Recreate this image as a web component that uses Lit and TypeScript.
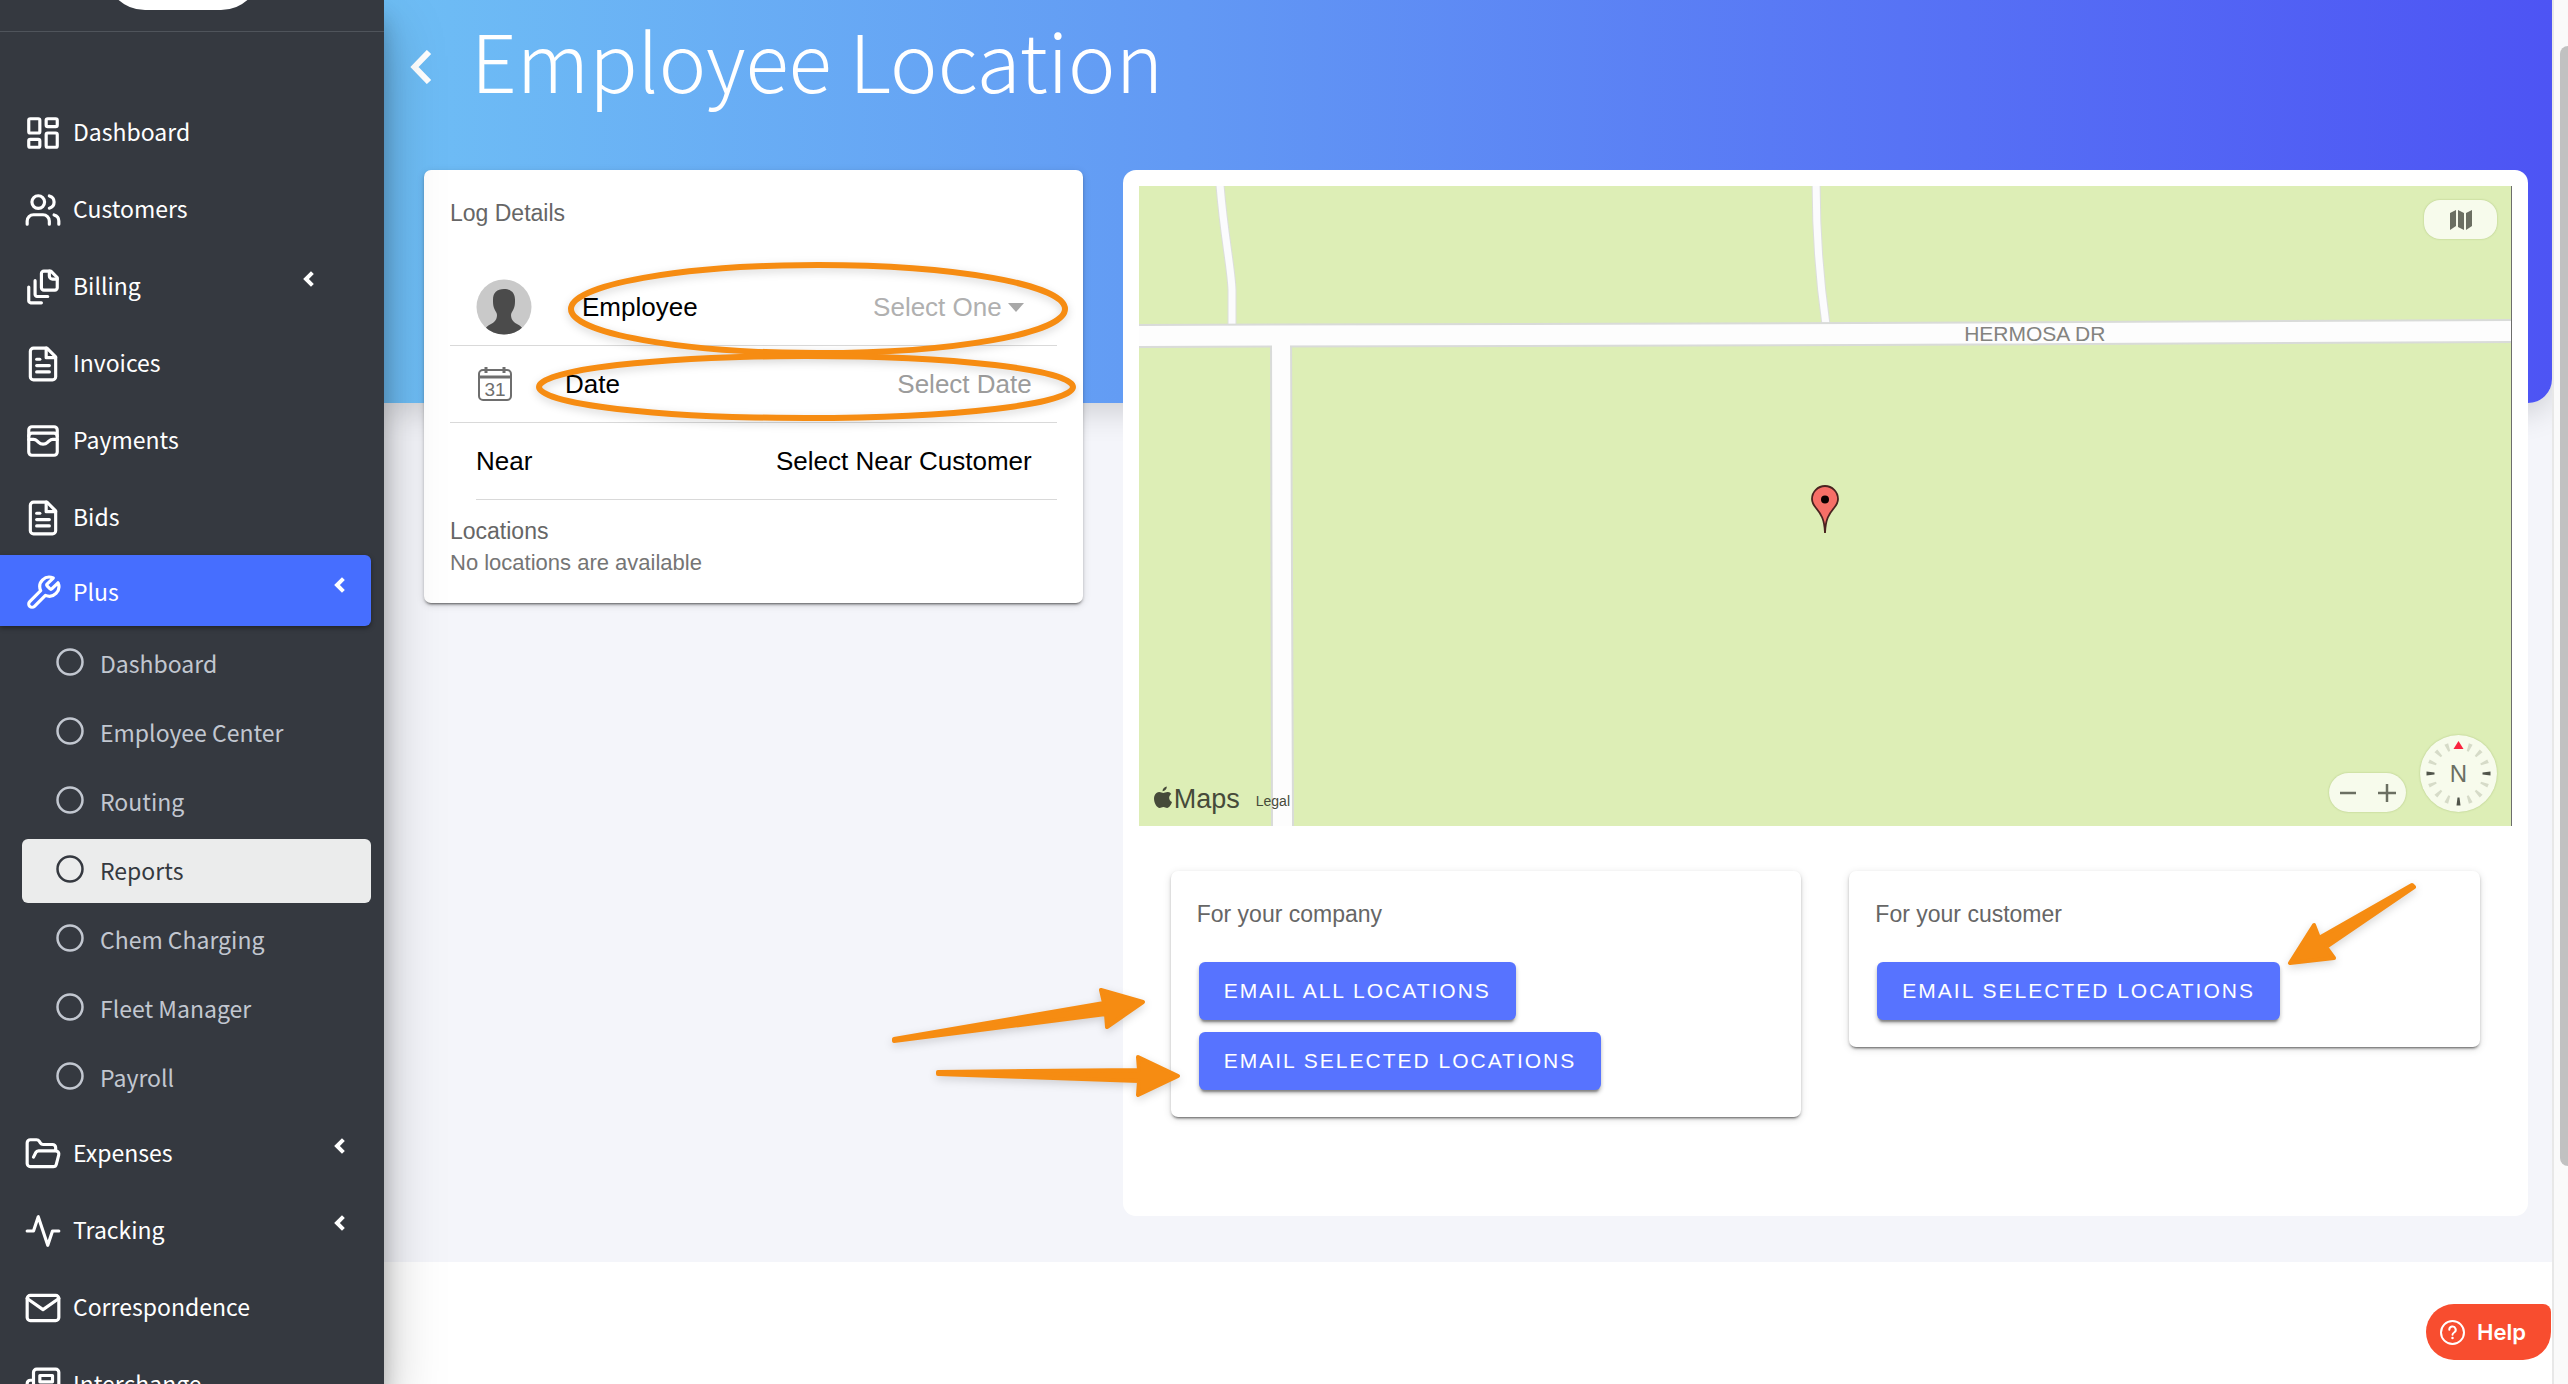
import { LitElement, html, css, svg, nothing } from "lit";
import { customElement, property } from "lit/decorators.js";
import { classMap } from "lit/directives/class-map.js";

const ICONS: Record<string, unknown> = {
  dashboard: svg`<rect x="3" y="3" width="7" height="9" rx="1"/><rect x="14" y="3" width="7" height="5" rx="1"/><rect x="14" y="12" width="7" height="9" rx="1"/><rect x="3" y="16" width="7" height="5" rx="1"/>`,
  users: svg`<path d="M16 21v-2a4 4 0 0 0-4-4H6a4 4 0 0 0-4 4v2"/><circle cx="9" cy="7" r="4"/><path d="M22 21v-2a4 4 0 0 0-3-3.87"/><path d="M16 3.13a4 4 0 0 1 0 7.75"/>`,
  stack: svg`<path d="M21 7h-3a2 2 0 0 1-2-2V2"/><path d="M21 6v6.5c0 .8-.7 1.5-1.5 1.5h-7c-.8 0-1.5-.7-1.5-1.5v-9c0-.8.7-1.5 1.5-1.5H17Z"/><path d="M7 8v8.8c0 .3.2.6.4.8.2.2.5.4.8.4H15"/><path d="M3 12v8.8c0 .3.2.6.4.8.2.2.5.4.8.4H11"/>`,
  file: svg`<path d="M14.5 2H6a2 2 0 0 0-2 2v16a2 2 0 0 0 2 2h12a2 2 0 0 0 2-2V7.5L14.5 2z"/><path d="M14 2v6h6"/><path d="M16 13H8"/><path d="M16 17H8"/><path d="M10 9H8"/>`,
  wallet: svg`<rect x="3" y="3" width="18" height="18" rx="2"/><path d="M3 9a2 2 0 0 1 2-2h14a2 2 0 0 1 2 2"/><path d="M3 11h3c.8 0 1.6.3 2.1.9l1.1.9c1.6 1.6 4.1 1.6 5.7 0l1.1-.9c.5-.5 1.3-.9 2.1-.9H21"/>`,
  wrench: svg`<path d="M14.7 6.3a1 1 0 0 0 0 1.4l1.6 1.6a1 1 0 0 0 1.4 0l3.77-3.77a6 6 0 0 1-7.94 7.94l-6.91 6.91a2.12 2.12 0 0 1-3-3l6.91-6.91a6 6 0 0 1 7.94-7.94l-3.76 3.76z"/>`,
  folder: svg`<path d="m6 14 1.45-2.9A2 2 0 0 1 9.24 10H20a2 2 0 0 1 1.94 2.5l-1.55 6a2 2 0 0 1-1.94 1.5H4a2 2 0 0 1-2-2V5c0-1.1.9-2 2-2h3.93a2 2 0 0 1 1.66.9l.82 1.2a2 2 0 0 0 1.66.9H18a2 2 0 0 1 2 2v2"/>`,
  activity: svg`<path d="M22 12h-4l-3 9L9 3l-3 9H2"/>`,
  mail: svg`<rect x="2" y="4" width="20" height="16" rx="2"/><path d="m22 6-10 7L2 6"/>`,
  news: svg`<path d="M4 22h16a2 2 0 0 0 2-2V4a2 2 0 0 0-2-2H8a2 2 0 0 0-2 2v16a2 2 0 0 1-2 2Zm0 0a2 2 0 0 1-2-2v-9c0-1.1.9-2 2-2h2"/><path d="M18 14h-8"/><path d="M15 18h-5"/><path d="M10 6h8v4h-8V6Z"/>`,
};

interface Item {
  label: string;
  icon: string;
  caret?: "near" | "edge";
  active?: boolean;
  children?: string[];
}

const MENU: Item[] = [
  { label: "Dashboard", icon: "dashboard" },
  { label: "Customers", icon: "users" },
  { label: "Billing", icon: "stack", caret: "near" },
  { label: "Invoices", icon: "file" },
  { label: "Payments", icon: "wallet" },
  { label: "Bids", icon: "file" },
  {
    label: "Plus",
    icon: "wrench",
    caret: "edge",
    active: true,
    children: ["Dashboard", "Employee Center", "Routing", "Reports", "Chem Charging", "Fleet Manager", "Payroll"],
  },
  { label: "Expenses", icon: "folder", caret: "edge" },
  { label: "Tracking", icon: "activity", caret: "edge" },
  { label: "Correspondence", icon: "mail" },
  { label: "Interchange", icon: "news" },
];

@customElement("side-nav")
class SideNav extends LitElement {
  @property() current = "Reports";

  static styles = css`
    :host {
      display: block;
      box-sizing: border-box;
      overflow: hidden;
      background: #353940;
      color: #fff;
      font-family: "Noto Sans CJK SC", "Open Sans", sans-serif;
      font-size: 23px;
      line-height: 36px;
    }
    .brand {
      display: flex;
      justify-content: center;
      align-items: flex-end;
      height: 32px;
      box-sizing: border-box;
      padding: 0 18px 21px 0;
      border-bottom: 1px solid #4f545b;
      overflow: hidden;
    }
    .logo {
      flex: none;
      width: 156px;
      height: 80px;
      border-radius: 40px;
      background: #fff;
    }
    ul {
      list-style: none;
      margin: 0;
      padding: 0;
    }
    .menu {
      display: flex;
      flex-direction: column;
      gap: 6px;
      padding: 63px 13px 0 0;
    }
    .open {
      margin-top: -2px;
    }
    a {
      color: inherit;
      text-decoration: none;
      display: flex;
      align-items: center;
      box-sizing: border-box;
    }
    .item {
      height: 71px;
      padding: 0 26px 0 24px;
      gap: 11px;
    }
    .item.near {
      padding-right: 57px;
    }
    .item.active {
      background: #466eff;
      border-radius: 0 6px 6px 0;
      box-shadow: 0 2px 5px rgba(0, 0, 0, 0.4);
    }
    .icon {
      width: 38px;
      height: 38px;
      margin-top: 4px;
      flex: none;
    }
    .label {
      flex: 1;
    }
    .caret {
      width: 11px;
      height: 16px;
      margin-bottom: 12px;
    }
    .sub {
      display: flex;
      flex-direction: column;
      gap: 5px;
      padding: 6px 0 0 22px;
      color: #c2c7d0;
    }
    .child {
      height: 64px;
      padding: 0 34px 2px;
      gap: 16px;
      border-radius: 6px;
    }
    .child.current {
      background: #ebecec;
      color: #353940;
    }
    .dot {
      width: 28px;
      height: 28px;
      margin-bottom: 2px;
      flex: none;
    }
  `;

  private item(it: Item) {
    return html`<li class=${it.children ? "open" : ""}>
      <a href="#" class=${classMap({ item: true, active: !!it.active, near: it.caret === "near" })}>
        <svg class="icon" viewBox="0 0 24 24" fill="none" stroke="currentColor" stroke-width="2"
          stroke-linecap="round" stroke-linejoin="round" aria-hidden="true">${ICONS[it.icon]}</svg>
        <span class="label">${it.label}</span>
        ${it.caret
          ? html`<svg class="caret" viewBox="0 0 11 16" fill="none" stroke="currentColor" stroke-width="4"
              stroke-linejoin="miter" aria-hidden="true"><path d="M9.400 1.600 3 8l6.400 6.400"/></svg>`
          : nothing}
      </a>
      ${it.children
        ? html`<ul class="sub">
            ${it.children.map(
              (c) => html`<li><a href="#" class=${classMap({ child: true, current: c === this.current })}>
                <svg class="dot" viewBox="0 0 28 28" aria-hidden="true"><circle cx="14" cy="14" r="12.500" fill="none" stroke="currentColor" stroke-width="2.500"/></svg>
                <span>${c}</span></a></li>`
            )}
          </ul>`
        : nothing}
    </li>`;
  }

  render() {
    return html`<div class="brand"><div class="logo"></div></div>
      <nav aria-label="Main"><ul class="menu">${MENU.map((m) => this.item(m))}</ul></nav>`;
  }
}

@customElement("location-map")
class LocationMap extends LitElement {
  static styles = css`
    :host {
      display: block;
      position: relative;
      height: 640px;
      background: #ddeeb6;
      border-right: 1px solid #6d6d6d;
      overflow: hidden;
      font-family: "Liberation Sans", Arial, sans-serif;
      color: #464a3a;
    }
    .roads {
      display: block;
      width: 100%;
      height: 100%;
    }
    .pin {
      position: absolute;
      left: calc(50% - 14px);
      top: 299px;
      width: 28px;
      height: 49px;
    }
    .type,
    .zoom,
    .compass {
      position: absolute;
      background: #f7fbec;
      box-shadow: 0 0 2px rgba(90, 120, 30, 0.35);
      color: #6b6f62;
    }
    .type {
      top: 14px;
      right: 14px;
      width: 73px;
      height: 39px;
      border: 0;
      padding: 0;
      border-radius: 16px;
      display: grid;
      place-items: center;
    }
    .type svg {
      width: 22px;
      height: 22px;
    }
    .zoom {
      right: 105px;
      bottom: 14px;
      width: 77px;
      height: 39px;
      border-radius: 20px;
      display: grid;
      grid-template-columns: 1fr 1fr;
    }
    .zoom button {
      border: 0;
      padding: 0;
      background: none;
      color: inherit;
      display: grid;
      place-items: center;
    }
    .zoom svg {
      width: 18px;
      height: 18px;
    }
    .compass {
      right: 14px;
      bottom: 14px;
      width: 77px;
      height: 77px;
      border-radius: 50%;
    }
    .compass svg {
      display: block;
      width: 100%;
      height: 100%;
    }
    .legal {
      position: absolute;
      left: 15px;
      bottom: 7px;
      display: flex;
      align-items: center;
      font-size: 27px;
      line-height: 36px;
    }
    .legal svg {
      width: 18px;
      height: 23px;
      margin: 0 2px 4px 0;
    }
    .legal a {
      color: inherit;
      font-size: 14px;
      text-decoration: none;
      margin: 4px 0 0 16px;
    }
    text {
      font-family: "Liberation Sans", Arial, sans-serif;
    }
  `;

  private tick(i: number) {
    if (i === 0) return nothing;
    const strong = i % 4 === 0;
    return svg`<path d="M36.500 6.500h4l-1 8h-2z" transform="rotate(${i * 22.5} 38.500 38.500)" fill=${strong ? "#50544a" : "#d6dbc8"}/>`;
  }

  render() {
    return html`
      <svg class="roads" viewBox="0 0 1372 640" preserveAspectRatio="xMidYMid slice" role="img" aria-label="Street map">
        <g fill="none" stroke-linecap="butt">
          <path d="M81-1C85 50 92 80 93 104V142" stroke="#dcdedc" stroke-width="9"/>
          <path d="M677-1C677 50 682 105 687 140" stroke="#dcdedc" stroke-width="9"/>
          <path d="M81-1C85 50 92 80 93 104V142" stroke="#fbfbfd" stroke-width="7"/>
          <path d="M677-1C677 50 682 105 687 140" stroke="#fbfbfd" stroke-width="7"/>
        </g>
        <path d="M132 150 133 642H154L152 150z" fill="#fdfdfd" stroke="#d9dbd9" stroke-width="2"/>
        <path d="M-3 139 720 137 1376 134V156L720 159-3 161z" fill="#fdfdfd" stroke="#d9dbd9" stroke-width="2"/>
        <path d="M133 155h18v10h-18z" fill="#fdfdfd"/>
        <text x="825" y="155" font-size="21" fill="#83837f">HERMOSA DR</text>
      </svg>
      <svg class="pin" viewBox="0 0 28 49" role="img" aria-label="Location pin">
        <path d="M14 48C13.500 34 10 29 5 23 2.500 20 1 17.500 1 14a13 13 0 0 1 26 0c0 3.500-1.500 6-4 9-5 6-8.500 11-9 25z" fill="#f66f67" stroke="#4a2320" stroke-width="1.800"/>
        <circle cx="14" cy="14.500" r="4" fill="#0b0000"/>
      </svg>
      <button class="type" aria-label="Map type">
        <svg viewBox="0 0 22 22" fill="currentColor"><path d="M0 4 6 1v16l-6 4zM8 1l6 3v17l-6-3zM16 4l6-3v16l-6 4z"/></svg>
      </button>
      <div class="zoom">
        <button aria-label="Zoom out"><svg viewBox="0 0 18 18" fill="none" stroke="currentColor" stroke-width="2.500"><path d="M1 9h16"/></svg></button>
        <button aria-label="Zoom in"><svg viewBox="0 0 18 18" fill="none" stroke="currentColor" stroke-width="2.500"><path d="M0 9h18M9 0v18"/></svg></button>
      </div>
      <div class="compass">
        <svg viewBox="0 0 77 77" role="img" aria-label="Compass">
          ${Array.from({ length: 16 }, (_, i) => this.tick(i))}
          <path d="M38.500 6 43.500 14h-10z" fill="#f9243f"/>
          <text x="38.500" y="47" font-size="24" text-anchor="middle" fill="#6b6f62">N</text>
        </svg>
      </div>
      <div class="legal">
        <svg viewBox="0 0 18 22" fill="currentColor" aria-hidden="true"><path d="M12.800 0c.2 2.500-1.900 4.900-4.200 4.800C8.300 2.400 10.500.3 12.800 0zM17.300 7.600c-3.200 2-2.700 6.500.7 7.900-.8 2.300-2.700 5.900-4.900 6-1.500 0-2-.9-3.700-.9s-2.300.9-3.700.9C2.500 21.600-1.200 14.500.4 9.400 1.300 6.800 3.400 5.500 5.300 5.500c1.600 0 2.900 1 4 1 1 0 2.700-1.200 4.700-1 1.300 0 2.500.7 3.300 2.100z"/></svg>
        <span>Maps</span><a href="#">Legal</a>
      </div>`;
  }
}

@customElement("app-root")
class AppRoot extends LitElement {
  static styles = css`
    :host {
      display: grid;
      grid-template-columns: 384px minmax(0, 1fr) 16px;
      height: 100vh;
      overflow: hidden;
      position: relative;
      background: #fff;
      font-family: "Liberation Sans", Arial, sans-serif;
      color: #000;
    }
    side-nav {
      position: relative;
      z-index: 2;
      min-height: 0;
      box-shadow: 0 28px 56px rgba(0, 0, 0, 0.25), 0 20px 20px rgba(0, 0, 0, 0.22);
    }
    main {
      min-width: 0;
      overflow: hidden;
    }
    .page {
      background: #f4f5fa;
      padding-bottom: 46px;
    }
    .hero {
      display: flex;
      align-items: flex-start;
      gap: 39px;
      height: 403px;
      box-sizing: border-box;
      padding: 2px 24px 0 26px;
      color: #fff;
      background: linear-gradient(90deg, #6ebef5 0%, #6299f4 37%, #5773f5 70%, #4d54f4 100%);
      border-radius: 0 0 24px 0;
      box-shadow: 0 8px 32px rgba(0, 0, 0, 0.16);
    }
    .back {
      margin-top: 48px;
      width: 22px;
      height: 34px;
      flex: none;
    }
    .back svg {
      display: block;
      width: 100%;
      height: 100%;
    }
    h1 {
      margin: 0;
      font-family: "Noto Sans CJK SC", "Open Sans", sans-serif;
      font-size: 80px;
      line-height: 112px;
      font-weight: 300;
    }
    .columns {
      display: grid;
      grid-template-columns: 15fr 32fr;
      gap: 40px;
      align-items: start;
      margin: -233px 24px 0 40px;
      position: relative;
    }
    .card {
      background: #fff;
      border-radius: 7px;
      box-shadow: 0 3px 2px -2px rgba(0, 0, 0, 0.4), 0 2px 3px rgba(0, 0, 0, 0.22), 0 2px 8px rgba(0, 0, 0, 0.12);
    }
    h2 {
      margin: 0;
      font-size: 23px;
      line-height: 32px;
      font-weight: 400;
      color: #666;
    }
    .details {
      padding: 27px 26px 24px;
    }
    .row {
      display: flex;
      align-items: center;
      height: 77px;
      box-sizing: border-box;
      padding: 0 25px 0 26px;
      border-bottom: 1px solid #d9d9d9;
      font-size: 26px;
    }
    .row.first {
      margin-top: 40px;
    }
    .row.inset {
      margin-left: 26px;
      padding-left: 0;
    }
    .avatar {
      width: 56px;
      height: 56px;
      margin-right: 50px;
    }
    .calendar {
      width: 36px;
      height: 36px;
      margin: 0 52px 0 1px;
    }
    label,
    .name {
      flex: 1;
    }
    select,
    input,
    .pick {
      appearance: none;
      border: 0;
      outline: 0;
      margin: 0;
      padding: 0;
      background: none;
      font: inherit;
      color: #b0b0b0;
      text-align: right;
    }
    input {
      width: 200px;
    }
    input::placeholder {
      color: #9c9c9c;
      opacity: 1;
    }
    .pick {
      color: #000;
    }
    .caret {
      width: 16px;
      height: 9px;
      margin: 0 8px 0 6px;
    }
    .locations {
      padding-top: 15px;
    }
    .locations p {
      margin: 0;
      font-size: 22px;
      line-height: 32px;
      color: #757575;
    }
    .panel {
      background: #fff;
      border-radius: 13px;
      padding: 16px;
    }
    .actions {
      display: grid;
      grid-template-columns: 1fr 1fr;
      gap: 48px;
      align-items: start;
      padding: 45px 32px 83px;
    }
    .action {
      padding: 27px 26px;
    }
    .buttons {
      display: flex;
      flex-direction: column;
      align-items: flex-start;
      gap: 12px;
      padding: 32px 2px 0;
    }
    .send {
      border: 0;
      height: 58px;
      padding: 0 25px;
      border-radius: 6px;
      background: #5773ff;
      color: #fff;
      font-family: inherit;
      font-size: 21px;
      letter-spacing: 2px;
      box-shadow: 0 4px 2px -2px rgba(0, 0, 0, 0.3), 0 3px 4px rgba(0, 0, 0, 0.28);
    }
    .track {
      background: #fafafa;
      border-left: 2px solid #e8e8e8;
      padding: 46px 0 0 6px;
    }
    .thumb {
      height: 1120px;
      border-radius: 8px 0 0 8px;
      background: #c1c1c1;
    }
    .help {
      position: absolute;
      z-index: 3;
      right: 17px;
      bottom: 24px;
      height: 56px;
      padding: 0 25px 0 14px;
      display: flex;
      align-items: center;
      gap: 12px;
      border: 0;
      border-radius: 28px 8px 28px 28px;
      background: #f84d2f;
      color: #fff;
      font-family: Inter, sans-serif;
      font-weight: 600;
      font-size: 22px;
    }
    .help svg {
      width: 25px;
      height: 25px;
    }
    .marks {
      position: absolute;
      inset: 0;
      width: 100%;
      height: 100%;
      z-index: 4;
      pointer-events: none;
      filter: drop-shadow(0 3px 4px rgba(0, 0, 0, 0.16));
    }
  `;

  render() {
    return html`
      <side-nav></side-nav>
      <main>
        <div class="page">
          <header class="hero">
            <a class="back" href="#" aria-label="Back">
              <svg viewBox="0 0 22 34" fill="none" stroke="#fff" stroke-width="6"><path d="M19 2 4.500 17 19 32"/></svg>
            </a>
            <h1>Employee Location</h1>
          </header>
          <div class="columns">
            <section class="card details">
              <h2>Log Details</h2>
              <div class="row first">
                <svg class="avatar" viewBox="0 0 56 56" aria-hidden="true">
                  <defs><clipPath id="face"><circle cx="28" cy="28" r="27.500"/></clipPath></defs>
                  <g clip-path="url(#face)">
                    <rect width="56" height="56" fill="#c9c9c9"/>
                    <path d="M28 10c-7 0-11 4-11 10.500 0 3.500 0 5.500 1 8.500 1 3 3 4.500 3 7 0 3-1 5-3 7-3 2.500-8 3.500-9 8v5h38v-5c-1-4.500-6-5.500-9-8-2-2-3-4-3-7 0-2.500 2-4 3-7 1-3 1-5 1-8.500C39 14 35 10 28 10z" fill="#4b4b4b"/>
                  </g>
                </svg>
                <label for="employee">Employee</label>
                <select id="employee"><option>Select One</option></select>
                <svg class="caret" viewBox="0 0 16 9" aria-hidden="true"><path d="M0 0h16L8 9z" fill="#a8a8a8"/></svg>
              </div>
              <div class="row">
                <svg class="calendar" viewBox="0 0 36 36" aria-hidden="true">
                  <g fill="none" stroke="#6e6e6e" stroke-width="2">
                    <rect x="2" y="4" width="32" height="30" rx="4"/>
                    <path d="M2 11h32" stroke-width="3"/>
                    <path d="M9 1v6M27 1v6" stroke-width="3"/>
                  </g>
                  <text x="18" y="30" text-anchor="middle" font-size="19" fill="#6e6e6e">31</text>
                </svg>
                <label for="date">Date</label>
                <input id="date" type="text" placeholder="Select Date" />
              </div>
              <div class="row inset">
                <span class="name">Near</span>
                <button class="pick" type="button">Select Near Customer</button>
              </div>
              <div class="locations">
                <h2>Locations</h2>
                <p>No locations are available</p>
              </div>
            </section>
            <section class="panel">
              <location-map></location-map>
              <div class="actions">
                <div class="card action">
                  <h2>For your company</h2>
                  <div class="buttons">
                    <button class="send" type="button">EMAIL ALL LOCATIONS</button>
                    <button class="send" type="button">EMAIL SELECTED LOCATIONS</button>
                  </div>
                </div>
                <div class="card action">
                  <h2>For your customer</h2>
                  <div class="buttons">
                    <button class="send" type="button">EMAIL SELECTED LOCATIONS</button>
                  </div>
                </div>
              </div>
            </section>
          </div>
        </div>
      </main>
      <div class="track"><div class="thumb"></div></div>
      <button class="help" type="button">
        <svg viewBox="0 0 25 25" fill="none" stroke="#fff" stroke-width="2" stroke-linecap="round" aria-hidden="true">
          <circle cx="12.500" cy="12.500" r="11.500"/><path d="M9.300 9.800a3.200 3.200 0 1 1 4.800 2.700c-1 .6-1.600 1.200-1.600 2.300"/><path d="M12.500 18v.1" stroke-width="2.500"/>
        </svg>
        <span>Help</span>
      </button>
      <svg class="marks" aria-hidden="true">
        <g fill="none" stroke="#f68c12" stroke-width="6">
          <ellipse cx="818" cy="309" rx="247" ry="44"/>
          <ellipse cx="806" cy="387" rx="267" ry="31"/>
        </g>
        <g fill="#f68c12" stroke="#f68c12" stroke-width="4" stroke-linejoin="round">
          <path d="M894 1039 1104 1003 1101 990 1143 1002 1107 1027 1106 1014 894 1041z"/>
          <path d="M938 1072 1139 1070 1138 1057 1178 1076 1138 1095 1139 1081 938 1074z"/>
          <path d="M2412 885 2319 938 2314 925 2290 963 2334 958 2326 947 2414 887z"/>
        </g>
      </svg>`;
  }
}
